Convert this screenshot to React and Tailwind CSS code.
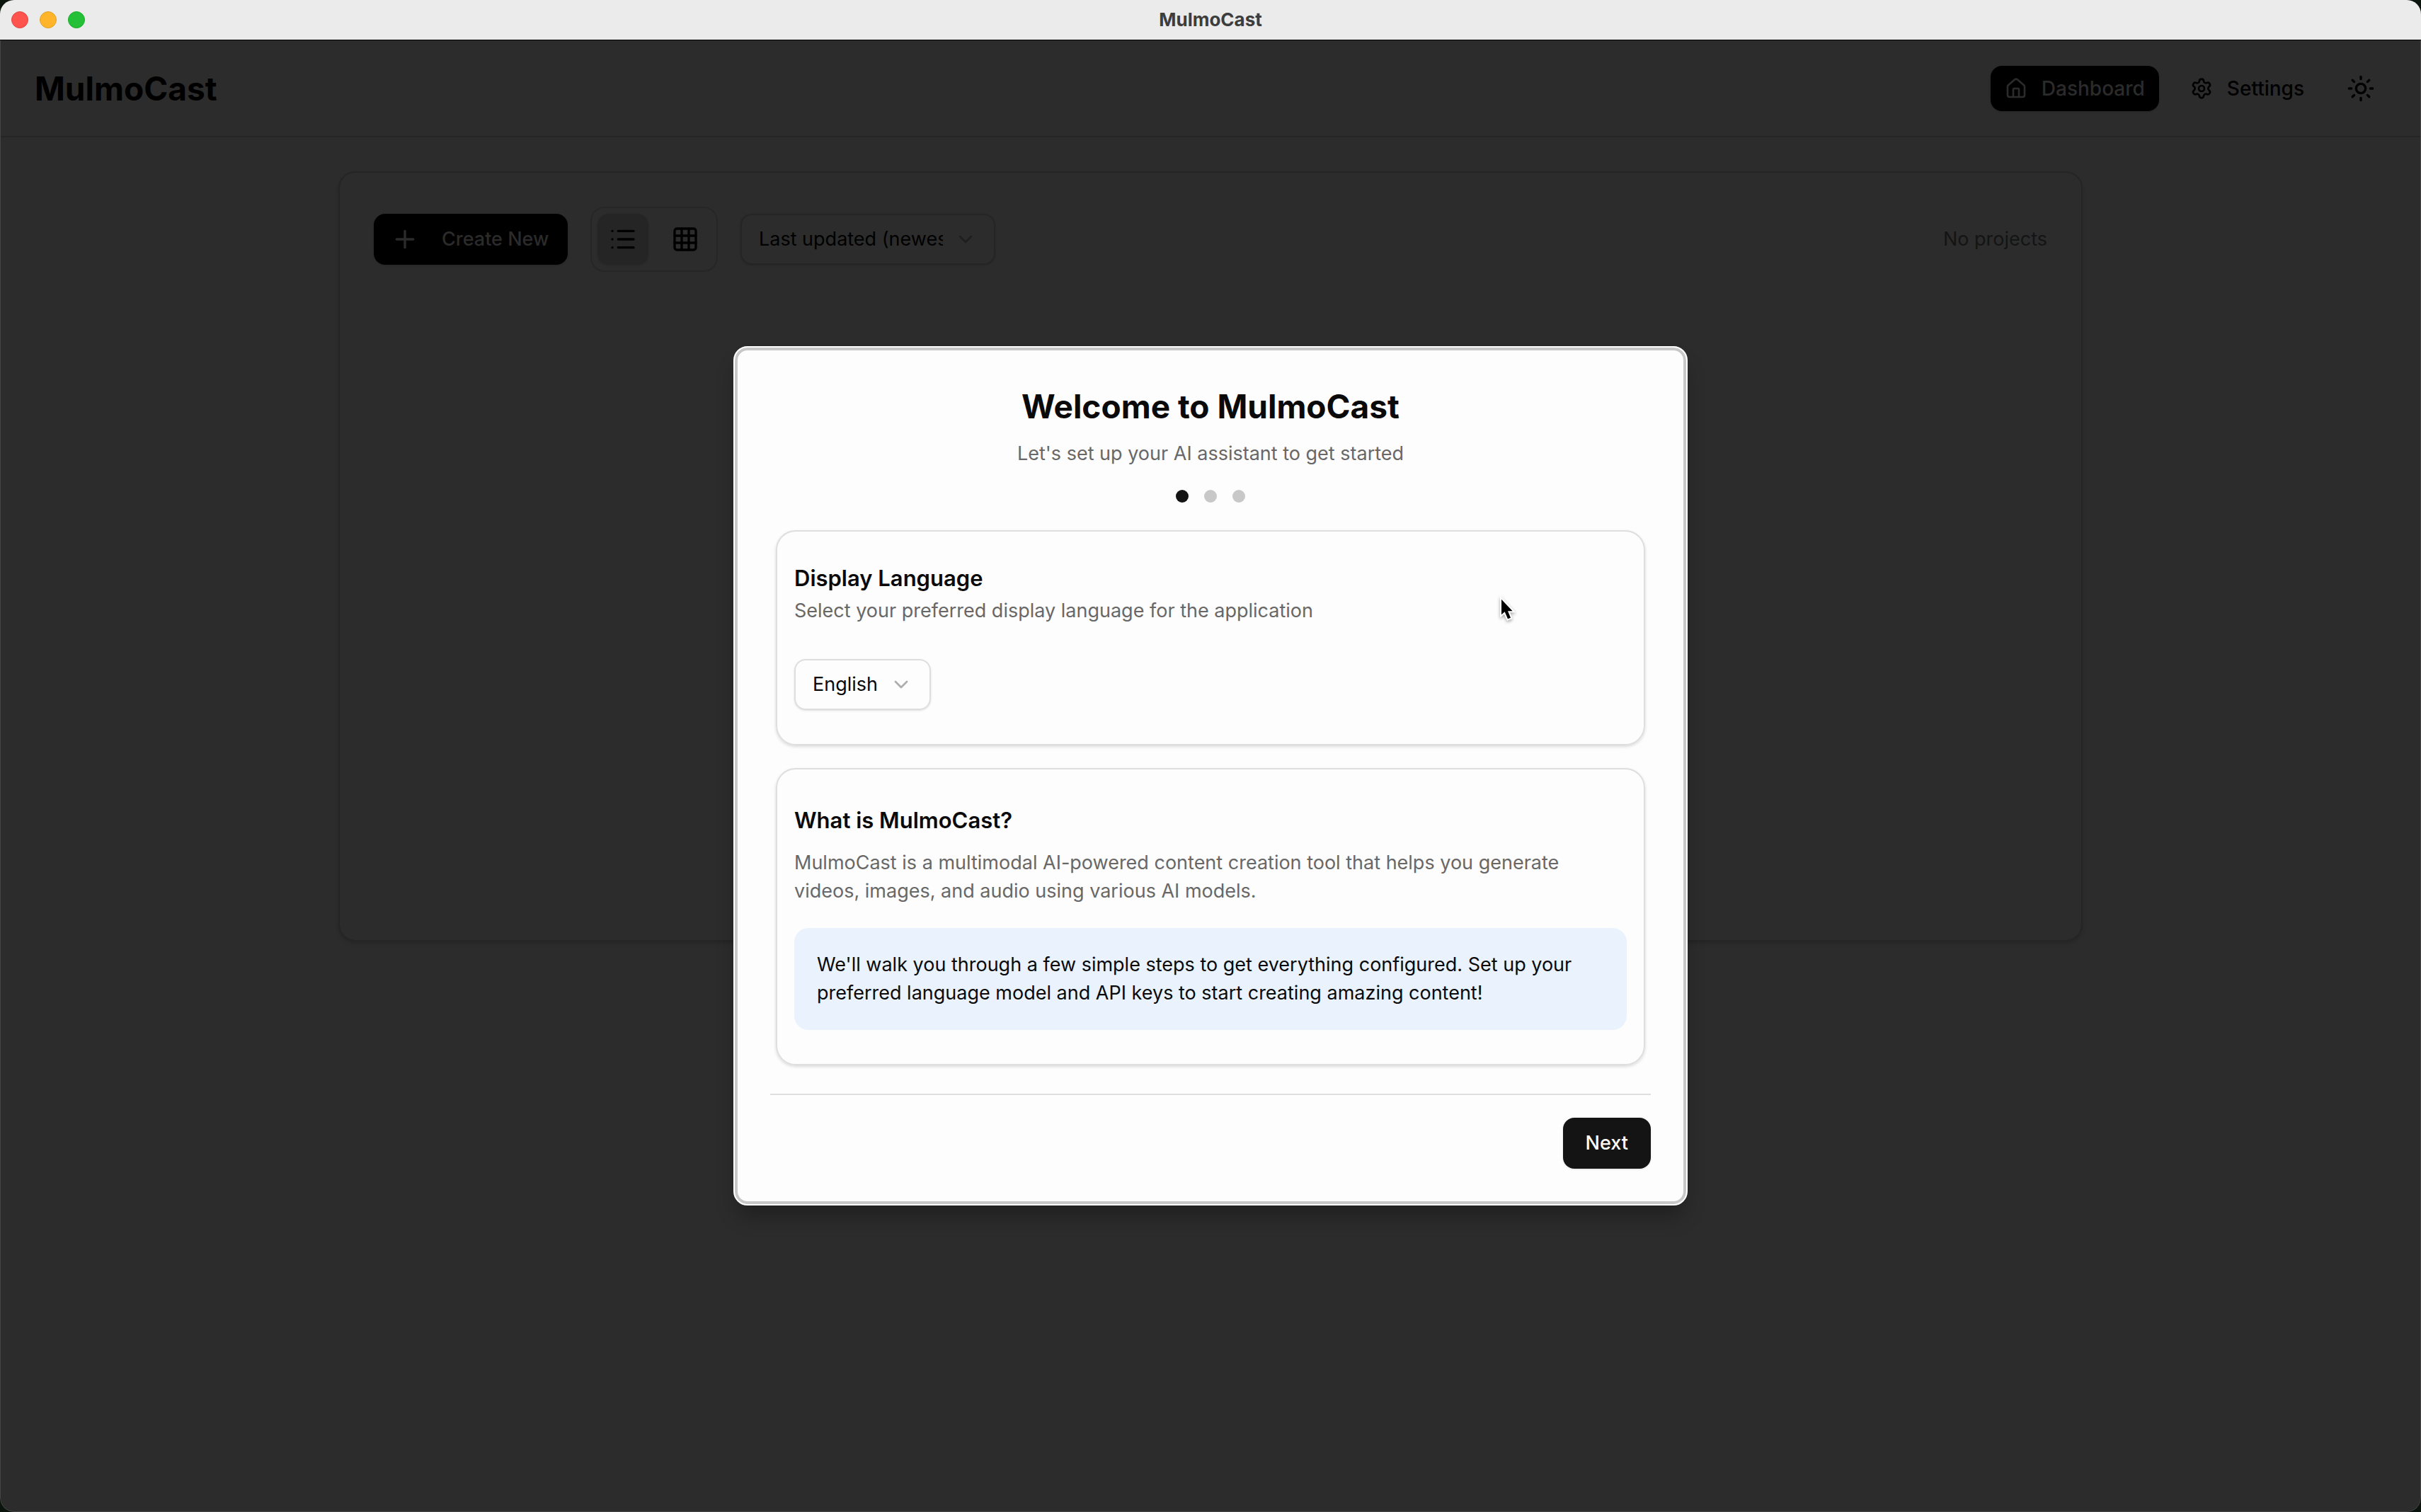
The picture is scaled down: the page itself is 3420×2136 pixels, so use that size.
import { useState } from "react";
import { ChevronDown, Grid3x3, House, List, Plus, Settings, Sun } from "lucide-react";

function TitleBar() {
  return (
    <div className="grid h-[57px] shrink-0 grid-cols-3 items-center border-b border-black bg-[#ebebeb] px-4">
      <div className="flex gap-4">
        <button aria-label="Close" className="size-6 rounded-full border border-[#e0443e] bg-[#ff544d]" />
        <button aria-label="Minimize" className="size-6 rounded-full border border-[#dea123] bg-[#ffb429]" />
        <button aria-label="Zoom" className="size-6 rounded-full border border-[#1aab29] bg-[#24c138]" />
      </div>
      <p className="text-center text-[26px] leading-8 font-bold text-[#3d3d3d]">MulmoCast</p>
    </div>
  );
}

function Header() {
  return (
    <header className="flex h-[137px] items-center justify-between border-b-2 border-[#252525] px-12">
      <h1 className="text-[46px] leading-[64px] font-bold">MulmoCast</h1>
      <nav className="flex items-center gap-6 text-[28px] leading-10 font-medium">
        <a href="#dashboard" className="flex h-16 items-center gap-5 rounded-2xl bg-black px-5 text-[#2b2b2b] shadow-sm">
          <House className="size-8" />
          Dashboard
        </a>
        <a href="#settings" className="flex h-16 items-center gap-5 rounded-2xl px-5">
          <Settings className="size-8" />
          Settings
        </a>
        <button aria-label="Toggle theme" className="flex size-[72px] items-center justify-center">
          <Sun className="size-10" />
        </button>
      </nav>
    </header>
  );
}

function Select({ label, options, className, arrow }) {
  return (
    <div className={"relative h-[72px] " + className}>
      <select
        aria-label={label}
        className="size-full appearance-none overflow-hidden rounded-2xl border-2 border-inherit bg-transparent pr-[72px] pl-6 text-[27px] leading-10 shadow-sm"
      >
        {options.map((o) => (
          <option key={o}>{o}</option>
        ))}
      </select>
      <ChevronDown className={"pointer-events-none absolute inset-y-0 right-[26px] my-auto size-8 " + arrow} />
    </div>
  );
}

function Dashboard() {
  return (
    <main className="px-12 pt-12">
      <section className="mx-auto min-h-[1088px] max-w-[2464px] rounded-3xl border-2 border-[#252525] p-12 shadow-md">
        <div className="flex items-center gap-8">
          <button className="flex h-[72px] w-[274px] items-center gap-8 rounded-2xl bg-black px-6 text-[27px] leading-10 font-medium whitespace-nowrap text-[#2b2b2b] shadow-sm">
            <Plus className="size-10 shrink-0" />
            Create New
          </button>
          <div className="flex gap-4 rounded-[20px] border-2 border-[#262626] p-2">
            <button aria-label="List view" className="flex size-[72px] items-center justify-center rounded-2xl bg-[#252525] shadow-sm">
              <List className="size-10" />
            </button>
            <button aria-label="Grid view" className="flex size-[72px] items-center justify-center rounded-2xl">
              <Grid3x3 className="size-10" />
            </button>
          </div>
          <Select
            label="Sort order"
            options={["Last updated (newest first)", "Last updated (oldest first)"]}
            className="w-[360px] border-[#252525]"
            arrow="text-[#1f1f1f]"
          />
          <p className="ml-auto text-[27px] leading-10 text-[#141414]">No projects</p>
        </div>
      </section>
    </main>
  );
}

function Card({ children }) {
  return (
    <section className="rounded-[28px] border-2 border-[#dedede] px-6 py-12 shadow-[0_2px_4px_rgba(0,0,0,0.14)]">
      {children}
    </section>
  );
}

function Onboarding() {
  const [step] = useState(0);
  return (
    <div
      role="dialog"
      aria-labelledby="welcome"
      className="w-full max-w-[1348px] rounded-[20px] border-2 border-white bg-[#fdfdfd] p-[50px] text-[#0a0a0a] shadow-[inset_0_0_0_4px_#c8c8c8,0_20px_30px_-6px_rgba(0,0,0,0.3)]"
    >
      <h2 id="welcome" className="text-center text-[46px] leading-[66px] font-bold">
        Welcome to MulmoCast
      </h2>
      <p className="mt-[14px] text-center text-[27px] leading-10 text-[#686868]">
        Let's set up your AI assistant to get started
      </p>
      <div className="mt-[31px] flex justify-center gap-[22px]">
        {[0, 1, 2].map((i) => (
          <span key={i} className={"size-[18px] rounded-full " + (i === step ? "bg-[#141414]" : "bg-[#c8c8c8]")} />
        ))}
      </div>
      <div className="mt-[39px] flex flex-col gap-8 px-2">
        <Card>
          <h3 className="text-[31px] leading-9 font-semibold">Display Language</h3>
          <p className="mt-2 mb-12 text-[27px] leading-10 text-[#686868]">
            Select your preferred display language for the application
          </p>
          <Select
            label="Display Language"
            options={["English", "日本語"]}
            className="w-[193px] border-[#dedede]"
            arrow="text-[#adadad]"
          />
        </Card>
        <Card>
          <h3 className="text-[31px] leading-[48px] font-semibold">What is MulmoCast?</h3>
          <p className="mt-4 pr-6 text-[27px] leading-10 text-[#686868]">
            MulmoCast is a multimodal AI-powered content creation tool that helps you generate videos, images, and
            audio using various AI models.
          </p>
          <p className="mt-8 rounded-[20px] bg-[#e9f2fd] p-8 text-[27px] leading-10">
            We'll walk you through a few simple steps to get everything configured. Set up your preferred language
            model and API keys to start creating amazing content!
          </p>
        </Card>
      </div>
      <div className="mt-10 flex justify-end border-t-2 border-[#dedede] pt-8">
        <button className="h-[72px] rounded-2xl bg-[#141414] px-8 text-[27px] leading-10 font-medium text-[#fdfdfd] shadow-sm">
          Next
        </button>
      </div>
    </div>
  );
}

function Cursor() {
  const points = "9,14 9,79 23,67 36,97 48,92 36,64 56,64";
  return (
    <svg
      viewBox="0 0 84 120"
      className="pointer-events-none absolute top-[842px] left-[2118px] h-10 w-7 overflow-visible drop-shadow-[0_2px_2px_rgba(0,0,0,0.35)]"
      aria-hidden="true"
    >
      <polygon points={points} fill="#fff" stroke="#fff" strokeWidth="12" />
      <polygon points={points} fill="#000" />
    </svg>
  );
}

export default function App() {
  return (
    <div className="relative min-h-screen bg-[#0b150d] font-['Inter','Noto_Sans_CJK_JP',sans-serif]">
      <div className="flex min-h-screen flex-col overflow-hidden rounded-[20px]">
        <TitleBar />
        <div className="relative grow rounded-b-[20px] border-x border-b border-[#454545] bg-[#2c2c2c] text-black">
          <Header />
          <Dashboard />
          <div className="absolute inset-0 flex items-center justify-center">
            <Onboarding />
          </div>
        </div>
      </div>
      <Cursor />
    </div>
  );
}
